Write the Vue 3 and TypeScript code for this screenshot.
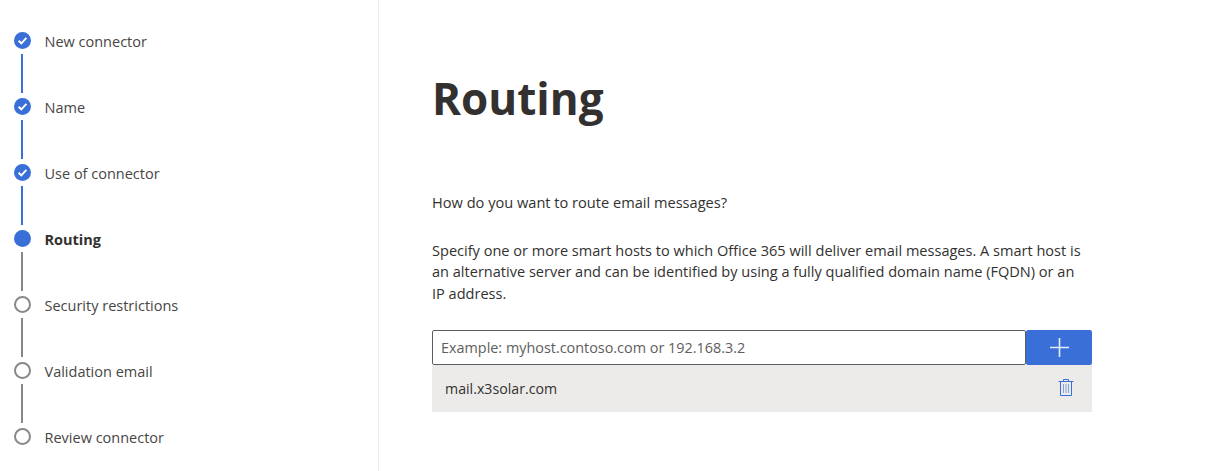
<script setup lang="ts">
interface Step {
  label: string
  state: 'done' | 'current' | 'todo'
}
const steps: Step[] = [
  { label: 'New connector', state: 'done' },
  { label: 'Name', state: 'done' },
  { label: 'Use of connector', state: 'done' },
  { label: 'Routing', state: 'current' },
  { label: 'Security restrictions', state: 'todo' },
  { label: 'Validation email', state: 'todo' },
  { label: 'Review connector', state: 'todo' },
]
</script>

<template>
  <div class="page">
    <nav class="sidebar">
      <div v-for="(step, i) in steps" :key="step.label" class="step" :class="`step--${step.state}`">
        <div class="marker">
          <span class="dot">
            <svg v-if="step.state === 'done'" width="11" height="11" viewBox="0 0 11 11">
              <path d="M1.6 5.8 4.3 8.3 9.4 2.9" fill="none" stroke="#fff" stroke-width="1.9" />
            </svg>
          </span>
          <span v-if="i < steps.length - 1" class="line"></span>
        </div>
        <span class="label">{{ step.label }}</span>
      </div>
    </nav>
    <main class="content">
      <h1>Routing</h1>
      <p class="question">How do you want to route email messages?</p>
      <p class="help">
        Specify one or more smart hosts to which Office 365 will deliver email messages. A smart host is an alternative
        server and can be identified by using a fully qualified domain name (FQDN) or an IP address.
      </p>
      <div class="add-row">
        <input type="text" placeholder="Example: myhost.contoso.com or 192.168.3.2" />
        <button type="button" aria-label="Add">
          <svg width="19" height="19" viewBox="0 0 19 19">
            <path d="M9.5 0V19M0 9.5H19" stroke="#e4edfa" stroke-width="1.6" fill="none" />
          </svg>
        </button>
      </div>
      <div class="host">
        <span>mail.x3solar.com</span>
        <svg class="trash" width="16" height="19" viewBox="0 0 16 19" fill="none" stroke="#3a6fd8" stroke-width="1">
          <path d="M.5 3.5H15.5M5.5 3.5V1.5H10.5V3.5M2.5 3.5V17.5H13.5V3.5" />
          <path d="M5.5 6V15M8 6V15M10.5 6V15" stroke-opacity=".6" />
        </svg>
      </div>
    </main>
  </div>
</template>

<style>
html,
body {
  margin: 0;
  background: #fff;
}
</style>

<style scoped>
.page {
  display: flex;
  height: 471px;
  overflow: hidden;
  font-family: 'Open Sans', 'Noto Sans', sans-serif;
  color: #323130;
}
.sidebar {
  box-sizing: border-box;
  width: 379px;
  padding: 32px 0 0 14px;
  border-right: 1px solid #edebe9;
}
.step {
  display: flex;
  gap: 13.5px;
  height: 66px;
}
.marker {
  display: flex;
  flex-direction: column;
  align-items: flex-start;
  width: 17px;
}
.dot {
  box-sizing: border-box;
  display: flex;
  align-items: center;
  justify-content: center;
  width: 17px;
  height: 17px;
  flex: none;
  border-radius: 50%;
  background: #3a6fd8;
}
.line {
  width: 2px;
  height: 39px;
  margin: 5px 0 0 7px;
  background: #3a6fd8;
}
.label {
  font-size: 14.5px;
  line-height: 19px;
  color: #484644;
}
.step--todo .dot {
  background: #fff;
  border: 2px solid #8a8886;
}
.step--todo .line,
.step--current .line {
  background: #8a8886;
}
.step--current .label {
  font-weight: 700;
  color: #323130;
}
.content {
  flex: 1;
  padding-left: 53px;
}
h1 {
  margin: 65px 0 0;
  font-size: 44px;
  line-height: 66px;
  font-weight: 700;
  color: #323130;
}
p {
  margin: 0;
  line-height: 21.5px;
  color: #323130;
}
.question {
  margin-top: 61px;
  font-size: 14.6px;
}
.help {
  width: 652px;
  margin-top: 26px;
  font-size: 14.55px;
}
.add-row {
  display: flex;
  width: 660px;
  height: 35px;
  margin-top: 26px;
}
input {
  box-sizing: border-box;
  width: 594px;
  height: 35px;
  padding: 0 8px;
  border: 1px solid #605e5c;
  border-radius: 2px;
  outline: none;
  font: 14.4px 'Open Sans', 'Noto Sans', sans-serif;
}
input::placeholder {
  color: #605e5c;
  opacity: 1;
}
button {
  display: flex;
  align-items: center;
  justify-content: center;
  width: 66px;
  height: 35px;
  padding: 0;
  border: 0;
  border-radius: 2px;
  background: #3a6fd8;
}
.host {
  display: flex;
  align-items: center;
  justify-content: space-between;
  box-sizing: border-box;
  width: 660px;
  height: 47px;
  padding: 0 18px 0 13px;
  background: #edebe9;
  font-size: 14.2px;
  color: #323130;
}
.trash {
  margin-bottom: 3px;
}
</style>
